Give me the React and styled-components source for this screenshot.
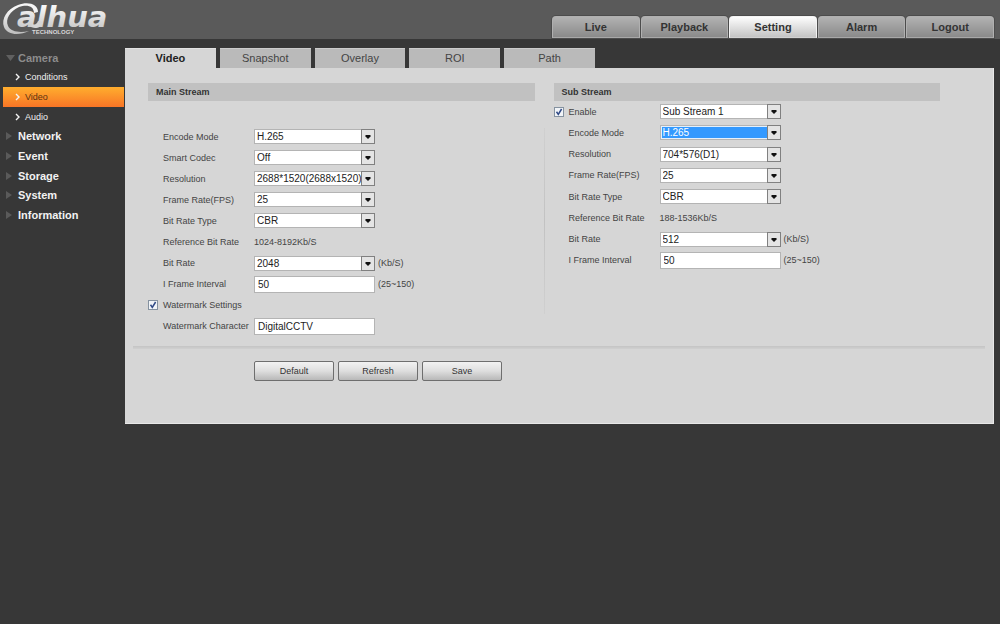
import React, { Component } from 'react';
import styled, { createGlobalStyle, css } from 'styled-components';

const GlobalStyle = createGlobalStyle`
  * {
    box-sizing: border-box;
  }

  body {
    margin: 0;
    background: #373737;
    color: #444;
    font-family: 'Liberation Sans', Arial, sans-serif;
    font-size: 9px;
  }

  a {
    text-decoration: none;
  }

  input, select, button {
    margin: 0;
    font-family: inherit;
  }
`;

const Header = styled.header`
  display: flex;
  justify-content: space-between;
  align-items: flex-end;
  height: 39px;
  padding: 0 6px 1px 0;
  background: #5a5a5a;
`;

const Logo = styled.svg`
  display: block;
  width: 116px;
  height: 38px;
`;

const MainNav = styled.nav`
  display: flex;
  gap: 1px;
  width: 442px;
`;

const MainLink = styled.a`
  flex: 1;
  height: 22px;
  border: 1px solid ${(props) => (props.$active ? '#f4f4f4' : '#b0b0b0')};
  border-bottom-color: ${(props) => (props.$active ? '#d2d2d2' : '#a8a8a8')};
  border-radius: 4px 4px 0 0;
  background: ${(props) =>
    props.$active
      ? 'linear-gradient(#fdfdfd, #c4c4c4)'
      : 'linear-gradient(#b2b2b2, #8a8a8a)'};
  box-shadow: 0 0 0 1px #4c4c4c;
  color: #333;
  font-size: 11px;
  font-weight: bold;
  line-height: 20px;
  text-align: center;
`;

const Body = styled.div`
  display: flex;
  padding: 9px 6px 0 0;
`;

const Sidebar = styled.nav`
  display: grid;
  grid-auto-rows: 1fr;
  flex: 0 0 125px;
  align-self: flex-start;
  height: 177px;
  padding: 0 1px 0 3px;
`;

const SideGroup = styled.a`
  display: grid;
  grid-template-columns: 15px 1fr;
  align-items: center;
  color: ${(props) => (props.$open ? '#8c8c8c' : '#f2f2f2')};
  font-size: 11px;
  font-weight: bold;

  svg {
    margin-left: 3px;
  }
`;

const SideItem = styled.a`
  display: grid;
  grid-template-columns: 10px 1fr;
  align-items: center;
  padding-left: 12px;
  background: ${(props) =>
    props.$active ? 'linear-gradient(#ffae2e, #f87526)' : 'none'};
  color: ${(props) => (props.$active ? '#5c3310' : '#f0f0f0')};
  font-size: 9px;
`;

const Content = styled.main`
  flex: 1;
  min-width: 0;
`;

const Tabs = styled.div`
  display: flex;
  gap: 4px;
  width: 470px;
`;

const Tab = styled.button`
  flex: 1;
  height: 20px;
  padding: 0 0 1px;
  border: 0;
  border-top: 1px solid ${(props) => (props.$active ? '#e2e2e2' : '#cbcbcb')};
  background: ${(props) => (props.$active ? '#d6d6d6' : '#bababa')};
  color: ${(props) => (props.$active ? '#222' : '#444')};
  font-size: 11px;
  font-weight: ${(props) => (props.$active ? 'bold' : 'normal')};
`;

const Panel = styled.form`
  padding: 15px 8px 42px;
  border-right: 1px solid #e8e8e8;
  border-bottom: 1px solid #e8e8e8;
  background: #d6d6d6;
`;

const Streams = styled.div`
  display: grid;
  grid-template-columns: 1fr 1px 1fr;
  column-gap: 9px;
  padding: 0 45px 0 15px;
`;

const StreamDivider = styled.div`
  margin: 45px 0 23px;
  background: linear-gradient(#d0d0d0, #c2c2c2, #d0d0d0);
`;

const StreamTitle = styled.h2`
  height: 18px;
  margin: 0;
  padding-left: 8px;
  background: #c1c1c1;
  color: #333;
  font-size: 9px;
  line-height: 18px;
`;

const Rows = styled.div`
  display: grid;
  grid-auto-rows: 1fr;
  height: ${(props) => props.$height};
  margin-top: ${(props) => props.$top || 0};
`;

const Row = styled.div`
  display: grid;
  grid-template-columns: 15px 91px 121px auto;
  align-items: center;
`;

const RowLabel = styled.label`
  grid-column: 2;
  white-space: nowrap;
`;

const Unit = styled.span`
  padding-left: 3px;
`;

const Check = styled.input`
  appearance: none;
  width: 10px;
  height: 10px;
  border: 1px solid #8592a0;
  background: #f1f4f8;

  &:checked {
    background: #f1f4f8
      url("data:image/svg+xml,%3Csvg xmlns='http://www.w3.org/2000/svg' viewBox='0 0 8 8'%3E%3Cpath d='M1.5 3.8 3.3 6.4 6.6 1' fill='none' stroke='%23304a86' stroke-width='1.5'/%3E%3C/svg%3E");
  }
`;

const field = css`
  width: 100%;
  border: 1px solid #b4b4b4;
  border-radius: 0;
  background: #fff;
  color: #222;
  font-size: 10px;
`;

const TextBox = styled.input`
  ${field}
  height: 17px;
  padding: 0 3px;
`;

const SelectBox = styled.div`
  position: relative;
`;

const SelectInput = styled.select`
  ${field}
  display: block;
  appearance: none;
  height: 15px;
  padding: 0 13px 0 2px;
  line-height: 13px;

  ${(props) =>
    props.$selected &&
    css`
      background: #3399ff;
      box-shadow: inset 0 0 0 1px #e4f0fc;
      color: #fff;
    `}
`;

const SelectArrow = styled.svg`
  position: absolute;
  top: 0;
  right: 0;
  width: 14px;
  height: 15px;
  pointer-events: none;
`;

const Separator = styled.hr`
  height: 3px;
  margin: 9px 0 12px;
  border: 0;
  background: linear-gradient(#c4c4c4, #d0d0d0);
`;

const Actions = styled.div`
  display: flex;
  gap: 4px;
  padding-left: 121px;
`;

const ActionButton = styled.button`
  width: 80px;
  height: 20px;
  padding: 0 0 1px;
  border: 1px solid #6e6e6e;
  border-radius: 2px;
  background: linear-gradient(#f2f2f2, #dedede 50%, #b8b8b8);
  color: #333;
  font-size: 9px;
`;

const mainLinks = ['Live', 'Playback', 'Setting', 'Alarm', 'Logout'];
const cameraItems = ['Conditions', 'Video', 'Audio'];
const sideGroups = ['Network', 'Event', 'Storage', 'System', 'Information'];
const tabs = ['Video', 'Snapshot', 'Overlay', 'ROI', 'Path'];

const mainRows = [
  { id: 'main-encode', label: 'Encode Mode', options: ['H.265', 'H.264'] },
  { id: 'main-codec', label: 'Smart Codec', options: ['Off', 'On'] },
  { id: 'main-resolution', label: 'Resolution', options: ['2688*1520(2688x1520)'] },
  { id: 'main-fps', label: 'Frame Rate(FPS)', options: ['25', '20', '15'] },
  { id: 'main-type', label: 'Bit Rate Type', options: ['CBR', 'VBR'] },
  { id: 'main-reference', label: 'Reference Bit Rate', text: '1024-8192Kb/S' },
  { id: 'main-rate', label: 'Bit Rate', options: ['2048', '4096'], unit: '(Kb/S)' },
  { id: 'main-interval', label: 'I Frame Interval', value: '50', unit: '(25~150)' },
  { id: 'watermark', label: 'Watermark Settings', check: true },
  { id: 'watermark-text', label: 'Watermark Character', value: 'DigitalCCTV' },
];

const subRows = [
  {
    id: 'sub-enable',
    label: 'Enable',
    check: true,
    options: ['Sub Stream 1', 'Sub Stream 2'],
  },
  {
    id: 'sub-encode',
    label: 'Encode Mode',
    options: ['H.265', 'H.264'],
    selected: true,
  },
  { id: 'sub-resolution', label: 'Resolution', options: ['704*576(D1)'] },
  { id: 'sub-fps', label: 'Frame Rate(FPS)', options: ['25', '20', '15'] },
  { id: 'sub-type', label: 'Bit Rate Type', options: ['CBR', 'VBR'] },
  { id: 'sub-reference', label: 'Reference Bit Rate', text: '188-1536Kb/S' },
  { id: 'sub-rate', label: 'Bit Rate', options: ['512', '1024'], unit: '(Kb/S)' },
  { id: 'sub-interval', label: 'I Frame Interval', value: '50', unit: '(25~150)' },
];

const BrandLogo = () => (
  <Logo viewBox="0 0 116 38" role="img" aria-label="alhua Technology">
    <defs>
      <linearGradient id="silver" x1="0" y1="0" x2="0" y2="1">
        <stop offset="0.2" stopColor="#f6f6f6" />
        <stop offset="1" stopColor="#bdbdbd" />
      </linearGradient>
    </defs>
    <path
      d="M38 12C38 4 28 1 18 5C7 9 1 19 4 27C7 35 19 36 29 31C20 33 11 32 8 26C5 19 10 11 19 7C27 4 34 6 34 13Z"
      fill="url(#silver)"
    />
    <text
      x="17"
      y="27"
      fill="url(#silver)"
      fontFamily="DejaVu Sans"
      fontSize="29"
      fontWeight="bold"
      fontStyle="italic"
    >
      alhua
    </text>
    <path d="M32 24C35 25 37 24 38 21L43 22C42 26 39 28 35 28C33 28 32 27 31 27Z" fill="#d4d4d4" />
    <text
      x="32"
      y="34"
      fill="#d8d8d8"
      fontFamily="Liberation Sans"
      fontSize="6"
      fontWeight="bold"
    >
      TECHNOLOGY
    </text>
  </Logo>
);

const Field = ({ row }) => {
  if (row.options) {
    return (
      <SelectBox>
        <SelectInput
          id={row.check ? `${row.id}-stream` : row.id}
          aria-label={row.check ? 'Stream' : undefined}
          $selected={row.selected}
        >
          {row.options.map((option) => (
            <option key={option}>{option}</option>
          ))}
        </SelectInput>
        <SelectArrow viewBox="0 0 14 15" aria-hidden="true">
          <rect x="0.5" y="0.5" width="13" height="14" fill="#e4e4e4" stroke="#808080" />
          <path d="M4.5 6h5v1.5L7 10 4.5 7.500z" fill="#111" />
        </SelectArrow>
      </SelectBox>
    );
  }
  if (row.value) {
    return <TextBox id={row.id} type="text" defaultValue={row.value} />;
  }
  return row.text ? <output id={row.id}>{row.text}</output> : null;
};

const StreamRow = ({ row }) => (
  <Row>
    {row.check && <Check id={row.id} type="checkbox" defaultChecked />}
    <RowLabel htmlFor={row.id}>{row.label}</RowLabel>
    <Field row={row} />
    {row.unit && <Unit>{row.unit}</Unit>}
  </Row>
);

class App extends Component {
  render() {
    return (
      <>
        <GlobalStyle />
        <Header>
          <BrandLogo />
          <MainNav>
            {mainLinks.map((link) => (
              <MainLink key={link} href={`#${link}`} $active={link === 'Setting'}>
                {link}
              </MainLink>
            ))}
          </MainNav>
        </Header>
        <Body>
          <Sidebar>
            <SideGroup href="#Camera" $open>
              <svg width="9" height="6" viewBox="0 0 9 6">
                <path d="M0 0h9L4.5 6z" fill="#606060" />
              </svg>
              Camera
            </SideGroup>
            {cameraItems.map((item) => (
              <SideItem key={item} href={`#${item}`} $active={item === 'Video'}>
                <svg width="6" height="8" viewBox="0 0 6 8">
                  <path d="M1 1l3 3-3 3" fill="none" stroke="#f4f4f4" strokeWidth="1.4" />
                </svg>
                {item}
              </SideItem>
            ))}
            {sideGroups.map((group) => (
              <SideGroup key={group} href={`#${group}`}>
                <svg width="6" height="8" viewBox="0 0 6 8">
                  <path d="M0 0l6 4-6 4z" fill="#5a5a5a" />
                </svg>
                {group}
              </SideGroup>
            ))}
          </Sidebar>
          <Content>
            <Tabs>
              {tabs.map((tab) => (
                <Tab key={tab} type="button" $active={tab === 'Video'}>
                  {tab}
                </Tab>
              ))}
            </Tabs>
            <Panel>
              <Streams>
                <section>
                  <StreamTitle>Main Stream</StreamTitle>
                  <Rows $top="25px" $height="211px">
                    {mainRows.map((row) => (
                      <StreamRow key={row.id} row={row} />
                    ))}
                  </Rows>
                </section>
                <StreamDivider />
                <section>
                  <StreamTitle>Sub Stream</StreamTitle>
                  <Rows $height="170px">
                    {subRows.map((row) => (
                      <StreamRow key={row.id} row={row} />
                    ))}
                  </Rows>
                </section>
              </Streams>
              <Separator />
              <Actions>
                <ActionButton type="button">Default</ActionButton>
                <ActionButton type="button">Refresh</ActionButton>
                <ActionButton type="button">Save</ActionButton>
              </Actions>
            </Panel>
          </Content>
        </Body>
      </>
    );
  }
}

export default App;
